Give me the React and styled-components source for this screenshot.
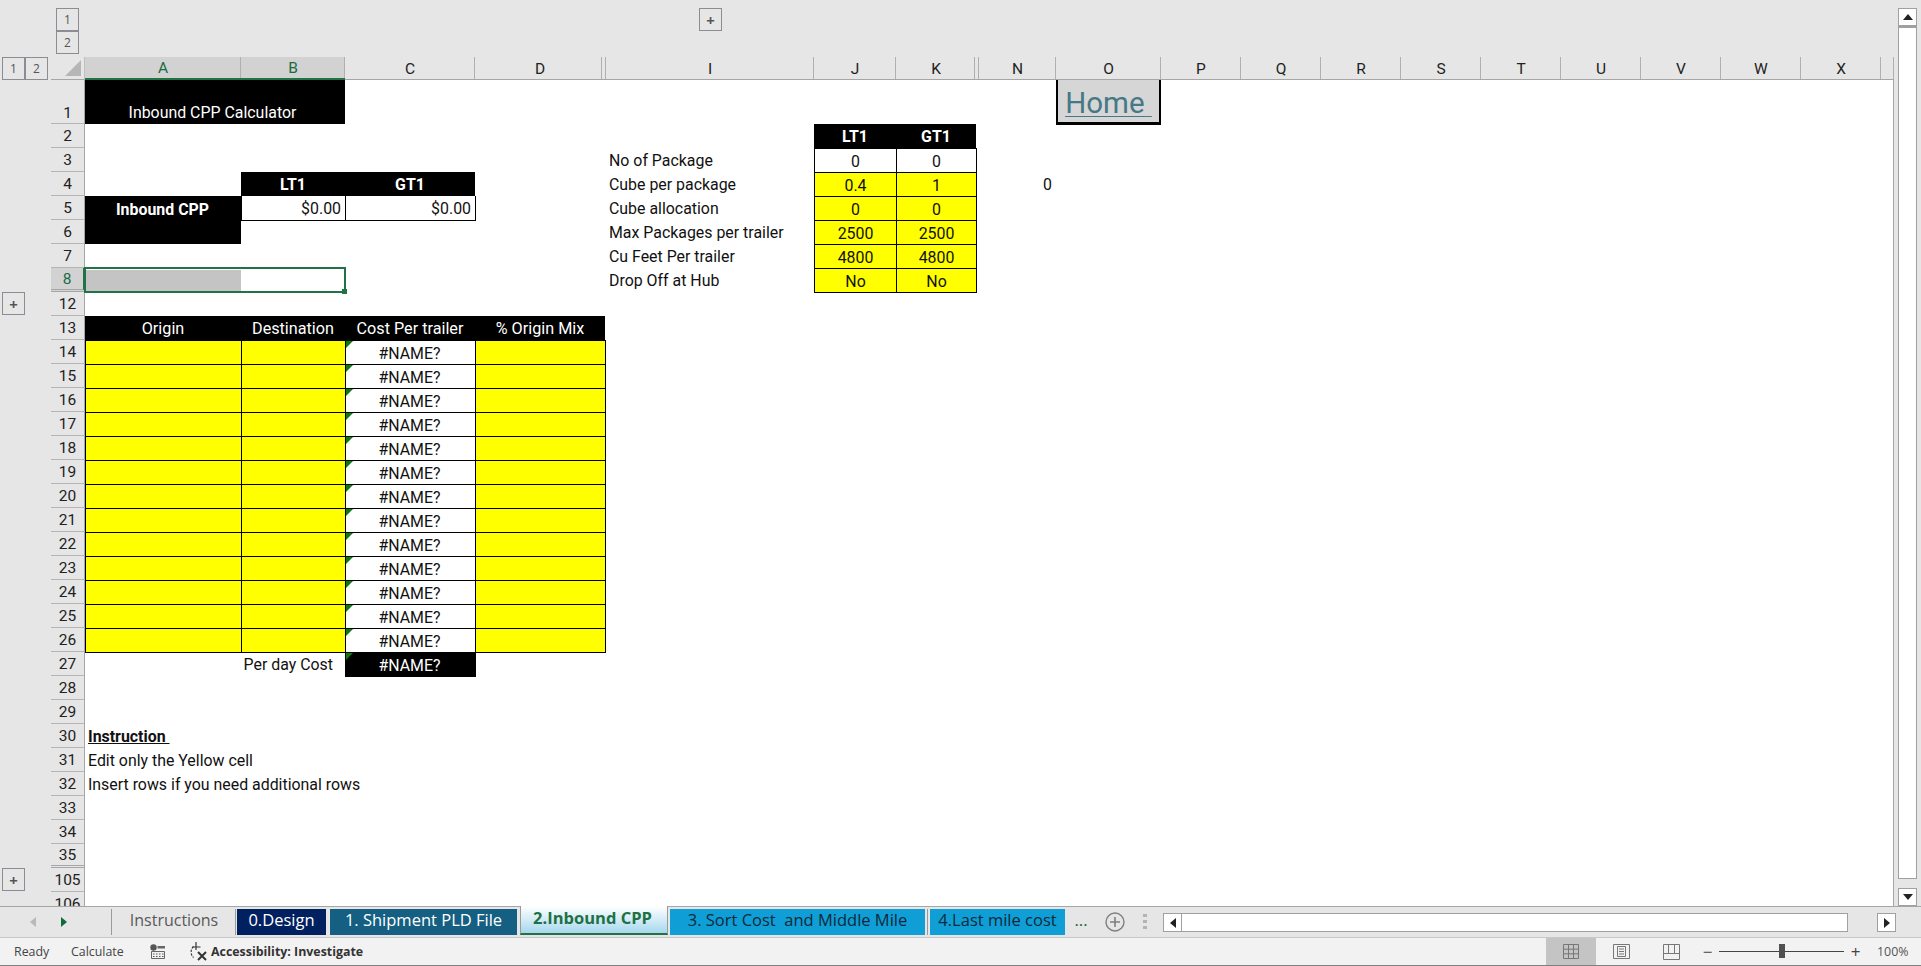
import React from "react";
import styled, { createGlobalStyle } from "styled-components";

const NARROW = `Roboto, "Liberation Sans", sans-serif`;
const UI = `"Open Sans", "Noto Sans", sans-serif`;

const GlobalStyle = createGlobalStyle`
  html, body {
    margin: 0;
    padding: 0;
    overflow: hidden;
    background: #e6e6e6;
  }
`;

// spreadsheet column widths, gutter and row numbers first
const COLUMNS = [
  { name: "", w: 51 },
  { name: "", w: 34 },
  { name: "A", w: 156, on: true },
  { name: "B", w: 104, on: true },
  { name: "C", w: 130 },
  { name: "D", w: 130, inset: 3 },
  { name: "", w: 1 },
  { name: "I", w: 208 },
  { name: "J", w: 82 },
  { name: "K", w: 80, inset: 1 },
  { name: "", w: 3 },
  { name: "N", w: 77 },
  { name: "O", w: 105 },
  ...["P", "Q", "R", "S", "T", "U", "V", "W", "X"].map((name) => ({ name, w: 80 })),
  { name: "", w: 13 },
];

const colIndex = (name) => COLUMNS.findIndex((c) => c.name === name) + 1;

const ROW_LABELS = [
  1, 2, 3, 4, 5, 6, 7, 8, 12, 13, 14, 15, 16, 17, 18, 19, 20, 21, 22, 23, 24,
  25, 26, 27, 28, 29, 30, 31, 32, 33, 34, 35, 105, 106,
];

const rowIndex = (label) => ROW_LABELS.indexOf(label) + 2;

const DATA_ROWS = [14, 15, 16, 17, 18, 19, 20, 21, 22, 23, 24, 25, 26];

const SIDE_ROWS = [
  { row: 3, label: "No of Package", j: "0", k: "0", white: true },
  { row: 4, label: "Cube per package", j: "0.4", k: "1" },
  { row: 5, label: "Cube allocation", j: "0", k: "0" },
  { row: 6, label: "Max Packages per trailer", j: "2500", k: "2500" },
  { row: 7, label: "Cu Feet Per trailer", j: "4800", k: "4800" },
  { row: 8, label: "Drop Off at Hub", j: "No", k: "No" },
];

const TABS = [
  { label: "0.Design", w: 89, bg: "#002060", color: "#ffffff" },
  { label: "1. Shipment PLD File", w: 187, bg: "#156082", color: "#ffffff" },
];

export default function App() {
  return (
    <>
      <GlobalStyle />
      <Page>
        <Workspace>
          <SheetColumn>
            <OutlineBar>
              <OutlineStack>
                <OutlineButton>1</OutlineButton>
                <OutlineButton>2</OutlineButton>
              </OutlineStack>
              <ColumnExpand>+</ColumnExpand>
            </OutlineBar>
            <Sheet>
              <Canvas />
              <RowOutline>
                <OutlineButton>1</OutlineButton>
                <OutlineButton>2</OutlineButton>
              </RowOutline>
              <Corner />
              {COLUMNS.slice(2).map((c, i) => (
                <ColHeader key={i} $col={i + 3} $on={c.on} $inset={c.inset}>
                  {c.name}
                </ColHeader>
              ))}
              {ROW_LABELS.map((label) => (
                <RowHeader
                  key={label}
                  $row={rowIndex(label)}
                  $on={label === 8}
                  $double={label === 8 || label === 35}
                >
                  {label}
                </RowHeader>
              ))}
              <GutterExpand $row={rowIndex(12)}>+</GutterExpand>
              <GutterExpand $row={rowIndex(105)}>+</GutterExpand>

              <TitleCell $col={colIndex("A")} $row={rowIndex(1)} $span={2}>
                Inbound CPP Calculator
              </TitleCell>

              <HeadCell $col={colIndex("B")} $row={rowIndex(4)}>LT1</HeadCell>
              <HeadCell $col={colIndex("C")} $row={rowIndex(4)}>GT1</HeadCell>
              <CppLabel $col={colIndex("A")} $row={rowIndex(5)}>Inbound CPP</CppLabel>
              <MoneyCell $col={colIndex("B")} $row={rowIndex(5)}>$0.00</MoneyCell>
              <MoneyCell $col={colIndex("C")} $row={rowIndex(5)}>$0.00</MoneyCell>

              <SelectedFill $col={colIndex("A")} $row={rowIndex(8)} />
              <Selection $col={colIndex("A")} $row={rowIndex(8)}>
                <FillHandle />
              </Selection>

              <HeadCell $col={colIndex("J")} $row={rowIndex(2)}>LT1</HeadCell>
              <HeadCell $col={colIndex("K")} $row={rowIndex(2)}>GT1</HeadCell>
              {SIDE_ROWS.map((r) => (
                <React.Fragment key={r.row}>
                  <TextCell $col={colIndex("I")} $row={rowIndex(r.row)}>{r.label}</TextCell>
                  <InputCell $col={colIndex("J")} $row={rowIndex(r.row)} $white={r.white}>{r.j}</InputCell>
                  <InputCell $col={colIndex("K")} $row={rowIndex(r.row)} $white={r.white}>{r.k}</InputCell>
                </React.Fragment>
              ))}
              <ValueCell $col={colIndex("N")} $row={rowIndex(4)}>0</ValueCell>
              <HomeCell $col={colIndex("O")} $row={rowIndex(1)}>
                <HomeLink>Home&nbsp;</HomeLink>
              </HomeCell>

              <TableHead $col={colIndex("A")} $row={rowIndex(13)}>Origin</TableHead>
              <TableHead $col={colIndex("B")} $row={rowIndex(13)}>Destination</TableHead>
              <TableHead $col={colIndex("C")} $row={rowIndex(13)}>Cost Per trailer</TableHead>
              <TableHead $col={colIndex("D")} $row={rowIndex(13)}>% Origin Mix</TableHead>
              {DATA_ROWS.map((row) => (
                <React.Fragment key={row}>
                  <InputCell $col={colIndex("A")} $row={rowIndex(row)} />
                  <InputCell $col={colIndex("B")} $row={rowIndex(row)} />
                  <NameCell $col={colIndex("C")} $row={rowIndex(row)}>#NAME?</NameCell>
                  <InputCell $col={colIndex("D")} $row={rowIndex(row)} />
                </React.Fragment>
              ))}
              <PerDayLabel $col={colIndex("B")} $row={rowIndex(27)}>Per day Cost</PerDayLabel>
              <NameCell $col={colIndex("C")} $row={rowIndex(27)} $dark>#NAME?</NameCell>

              <InstructionTitle $col={colIndex("A")} $row={rowIndex(30)}>
                <u>Instruction&nbsp;</u>
              </InstructionTitle>
              <TextCell $col={colIndex("A")} $row={rowIndex(31)} $overflow>
                Edit only the Yellow cell
              </TextCell>
              <TextCell $col={colIndex("A")} $row={rowIndex(32)} $overflow>
                Insert rows if you need additional rows
              </TextCell>
            </Sheet>
          </SheetColumn>
          <VerticalScroll>
            <ScrollButton>
              <svg width="10" height="6" viewBox="0 0 10 6"><path d="M5 0 10 6H0z" fill="#222" /></svg>
            </ScrollButton>
            <VerticalThumb />
            <ScrollButton>
              <svg width="10" height="6" viewBox="0 0 10 6"><path d="M0 0h10L5 6z" fill="#222" /></svg>
            </ScrollButton>
          </VerticalScroll>
        </Workspace>

        <TabBar>
          <TabNav>
            <svg width="6" height="10" viewBox="0 0 6 10"><path d="M6 0v10L0 5z" fill="#b9b9b9" /></svg>
            <svg width="6" height="10" viewBox="0 0 6 10"><path d="M0 0v10l6-5z" fill="#0f6b3a" /></svg>
          </TabNav>
          <TabDivider />
          <PlainTab>Instructions</PlainTab>
          <TabDivider />
          {TABS.map((t) => (
            <Tab key={t.label} $w={t.w} $bg={t.bg} $color={t.color}>{t.label}</Tab>
          ))}
          <ActiveTab>2.Inbound CPP</ActiveTab>
          <Tab $w={255} $bg="#0f9ed5" $color="#0e2a3a">3. Sort Cost&nbsp; and Middle Mile</Tab>
          <TabDivider $tight />
          <Tab $w={135} $bg="#0f9ed5" $color="#0e2a3a">4.Last mile cost</Tab>
          <MoreTabs>...</MoreTabs>
          <AddSheet>
            <svg width="20" height="20" viewBox="0 0 20 20" fill="none" stroke="#7f7f7f">
              <circle cx="10" cy="10" r="9" strokeWidth="1.4" />
              <path d="M10 5v10M5 10h10" strokeWidth="1.6" />
            </svg>
          </AddSheet>
          <SplitDots>
            <svg width="4" height="16" viewBox="0 0 4 16"><path d="M0 0h4v3H0zM0 6h4v3H0zM0 12h4v3H0z" fill="#b4b4b4" /></svg>
          </SplitDots>
          <HorizontalScroll>
            <ScrollButton $wide>
              <svg width="6" height="10" viewBox="0 0 6 10"><path d="M6 0v10L0 5z" fill="#222" /></svg>
            </ScrollButton>
            <HorizontalThumb />
            <ScrollButton $wide>
              <svg width="6" height="10" viewBox="0 0 6 10"><path d="M0 0v10l6-5z" fill="#222" /></svg>
            </ScrollButton>
          </HorizontalScroll>
        </TabBar>

        <StatusBar>
          <StatusText $w={57}>Ready</StatusText>
          <StatusText $w={79}>Calculate</StatusText>
          <StatusIcon $w={38}>
            <svg width="15" height="15" viewBox="0 0 15 15">
              <circle cx="3.500" cy="3.500" r="3.200" fill="#555" />
              <path d="M7.500 2h7.500v2.500H7.500z" fill="#666" />
              <path d="M1.500 7.500h13v7h-13z" fill="none" stroke="#666" />
              <path d="M3 9.500h1.500v1H3zM6 9.500h1.500v1H6zM9 9.500h1.500v1H9zM12 9.500h1.500v1H12zM3 12h1.500v1H3zM6 12h1.500v1H6zM9 12h1.500v1H9zM12 12h1.500v1H12z" fill="#555" />
            </svg>
          </StatusIcon>
          <StatusIcon $w={23}>
            <svg width="20" height="20" viewBox="0 0 20 20" fill="none" stroke="#333">
              <path d="M5.500 4.500a7.500 7.500 0 0 0 0 11" strokeWidth="1.100" strokeDasharray="2.500 1.200" />
              <path d="M8 0v8M4.500 5h8" strokeWidth="1.200" />
              <path d="M10 10l8 8M18 10l-8 8" strokeWidth="2" />
            </svg>
          </StatusIcon>
          <AccessibilityText>Accessibility: Investigate</AccessibilityText>
          <ViewButtons>
            <ViewButton $on>
              <svg width="16" height="15" viewBox="0 0 16 15" fill="none" stroke="#777">
                <path d="M.5.500h15v14H.5zM5.500.500v14M10.500.500v14M.5 5.200h15M.5 9.800h15" />
              </svg>
            </ViewButton>
            <ViewButton>
              <svg width="17" height="15" viewBox="0 0 17 15" fill="none" stroke="#777">
                <path d="M.5.500h16v14H.5zM4.500 2.500h8v10h-8zM6 5h5M6 7.500h5M6 10h5" />
              </svg>
            </ViewButton>
            <ViewButton>
              <svg width="17" height="16" viewBox="0 0 17 16" fill="none" stroke="#777">
                <path d="M.5.500h16v15H.5zM.5 9.500h16M5.500.5v9M11.500.5v9" />
              </svg>
            </ViewButton>
          </ViewButtons>
          <ZoomControl>
            <ZoomGlyph>−</ZoomGlyph>
            <ZoomTrack>
              <ZoomThumb />
            </ZoomTrack>
            <ZoomGlyph>+</ZoomGlyph>
          </ZoomControl>
          <ZoomValue>100%</ZoomValue>
        </StatusBar>
      </Page>
    </>
  );
}

const Page = styled.div`
  width: 1921px;
  height: 966px;
  display: flex;
  flex-direction: column;
  background: #e6e6e6;
  overflow: hidden;
`;

const Workspace = styled.div`
  height: 906px;
  display: flex;
`;

const SheetColumn = styled.div`
  width: 1895px;
  display: flex;
  flex-direction: column;
`;

const OutlineBar = styled.div`
  height: 57px;
  padding: 8px 0 0 56px;
  box-sizing: border-box;
  display: flex;
  align-items: flex-start;
`;

const OutlineStack = styled.div`
  display: flex;
  flex-direction: column;
`;

const OutlineButton = styled.div`
  width: 23px;
  height: 23px;
  box-sizing: border-box;
  border: 1px solid #8c8c94;
  display: flex;
  align-items: center;
  justify-content: center;
  font: 12px ${UI};
  color: #555;
  background: #e6e6e6;
`;

const ColumnExpand = styled(OutlineButton)`
  margin-left: 620px;
  font-size: 15px;
  font-weight: 700;
`;

const Sheet = styled.div`
  flex: 1;
  min-height: 0;
  display: grid;
  grid-template-columns: ${COLUMNS.map((c) => c.w + "px").join(" ")};
  grid-template-rows: 23px 44px repeat(${ROW_LABELS.length - 1}, 24px);
  overflow: hidden;
  font: 15.9px ${NARROW};
  color: #111;
`;

const Canvas = styled.div`
  grid-column: 3 / -1;
  grid-row: 2 / -1;
  background: #fff;
  border-right: 1px solid #a6a6a6;
`;

const RowOutline = styled.div`
  grid-column: 1;
  grid-row: 1;
  display: flex;
  padding-left: 2px;
`;

const Corner = styled.div`
  grid-column: 2;
  grid-row: 1;
  border-right: 1px solid #c0c0c0;
  border-bottom: 1px solid #a6a6a6;
  position: relative;
  &::after {
    content: "";
    position: absolute;
    right: 3px;
    bottom: 3px;
    width: 16px;
    height: 16px;
    background: #b6b6b6;
    clip-path: polygon(100% 0, 100% 100%, 0 100%);
  }
`;

const ColHeader = styled.div`
  grid-column: ${(p) => p.$col};
  grid-row: 1;
  position: relative;
  display: flex;
  align-items: center;
  justify-content: center;
  box-sizing: border-box;
  padding-top: 1px;
  font-size: 15.5px;
  background: ${(p) => (p.$on ? "#d2d2d2" : "#e6e6e6")};
  color: ${(p) => (p.$on ? "#1c6b44" : "#222")};
  border-bottom: ${(p) => (p.$on ? "2px solid #217346" : "1px solid #a6a6a6")};
  &::after {
    content: "";
    position: absolute;
    top: 0;
    bottom: 0;
    right: ${(p) => p.$inset || 0}px;
    width: 1px;
    background: #b0b0b0;
  }
`;

const RowHeader = styled.div`
  grid-column: 2;
  grid-row: ${(p) => p.$row};
  display: flex;
  align-items: ${(p) => (p.$row === 2 ? "flex-end" : "center")};
  justify-content: center;
  padding-top: 1px;
  padding-bottom: ${(p) => (p.$row === 2 ? "1px" : "0")};
  box-sizing: border-box;
  font-size: 15.5px;
  background: ${(p) => (p.$on ? "#d2d2d2" : "#e6e6e6")};
  color: ${(p) => (p.$on ? "#1c6b44" : "#222")};
  border-right: ${(p) => (p.$on ? "2px solid #217346" : "1px solid #a6a6a6")};
  border-bottom: ${(p) => (p.$double ? "3px double #a6a6a6" : "1px solid #b4b4b4")};
`;

const GutterExpand = styled(OutlineButton)`
  grid-column: 1;
  grid-row: ${(p) => p.$row};
  margin-left: 2px;
  font-size: 15px;
  font-weight: 700;
`;

const Cell = styled.div`
  grid-column: ${(p) => p.$col} / span ${(p) => p.$span || 1};
  grid-row: ${(p) => p.$row};
  display: flex;
  align-items: center;
  justify-content: center;
  min-width: 0;
  padding-top: 1px;
  white-space: nowrap;
`;

const TitleCell = styled(Cell)`
  background: #000;
  color: #fff;
  align-items: flex-end;
  padding: 0 5px 2px 0;
`;

const HeadCell = styled(Cell)`
  background: #000;
  color: #fff;
  font-weight: 700;
`;

const TableHead = styled(Cell)`
  background: #000;
  color: #fff;
  font-size: 16.2px;
`;

const CppLabel = styled(Cell)`
  grid-row: ${(p) => p.$row} / span 2;
  background: #000;
  color: #fff;
  font-weight: 700;
  align-items: flex-start;
  padding-top: 4px;
  padding-right: 1px;
`;

const BorderCell = styled(Cell)`
  border: 1px solid #000;
  margin: 0 -1px -1px 0;
`;

const MoneyCell = styled(BorderCell)`
  justify-content: flex-end;
  padding-right: 4px;
  background: #fff;
  border-top: 0;
`;

const InputCell = styled(BorderCell)`
  background: ${(p) => (p.$white ? "#fff" : "#ffff00")};
`;

const NameCell = styled(BorderCell)`
  position: relative;
  padding-right: 2px;
  background: ${(p) => (p.$dark ? "#000" : "#fff")};
  color: ${(p) => (p.$dark ? "#fff" : "#111")};
  &::before {
    content: "";
    position: absolute;
    left: 0;
    top: 0;
    width: 7px;
    height: 7px;
    background: #0a7d0a;
    clip-path: polygon(0 0, 100% 0, 0 100%);
  }
`;

const TextCell = styled(Cell)`
  justify-content: flex-start;
  padding-left: 3px;
  overflow: ${(p) => (p.$overflow ? "visible" : "hidden")};
`;

const ValueCell = styled(Cell)`
  justify-content: flex-end;
  padding-right: 4px;
`;

const PerDayLabel = styled(Cell)`
  justify-content: flex-end;
  padding-right: 12px;
`;

const InstructionTitle = styled(TextCell)`
  font-weight: 700;
`;

const HomeCell = styled(Cell)`
  grid-row: ${(p) => p.$row};
  background: #d6d6d6;
  border: 2px solid #000;
  border-top: 0;
  border-bottom-width: 3px;
  margin-bottom: -1px;
  padding-top: 3px;
  box-sizing: border-box;
`;

const HomeLink = styled.span`
  font-size: 29.5px;
  color: #467886;
  text-decoration: underline;
  text-decoration-thickness: 1px;
  text-underline-offset: 3px;
`;

const SelectedFill = styled(Cell)`
  background: #c4c4c4;
  margin: 2px 0 1px 1px;
`;

const Selection = styled(Cell)`
  grid-column: ${(p) => p.$col} / span 2;
  position: relative;
  border: 2px solid #217346;
  margin: -1px;
  box-sizing: border-box;
`;

const FillHandle = styled.div`
  position: absolute;
  right: -3px;
  bottom: -3px;
  width: 5px;
  height: 5px;
  background: #217346;
`;

const VerticalScroll = styled.div`
  margin: 8px 4px 0 3px;
  width: 19px;
  display: flex;
  flex-direction: column;
`;

const ScrollButton = styled.div`
  flex: none;
  width: ${(p) => (p.$wide ? "19px" : "auto")};
  height: ${(p) => (p.$wide ? "auto" : "18px")};
  box-sizing: border-box;
  border: 1px solid #a0a0a0;
  background: #fff;
  display: flex;
  align-items: center;
  justify-content: center;
`;

const VerticalThumb = styled.div`
  flex: 1;
  background: #fff;
  border: 1px solid #a0a0a0;
  border-top-width: 2px;
  margin-bottom: 9px;
`;

const TabBar = styled.div`
  height: 31px;
  display: flex;
  align-items: flex-start;
  padding-top: 2px;
  box-sizing: border-box;
  border-top: 1px solid #a6a6a6;
  font: 16.5px ${UI};
`;

const TabNav = styled.div`
  width: 111px;
  height: 26px;
  padding-left: 30px;
  box-sizing: border-box;
  display: flex;
  align-items: center;
  gap: 25px;
`;

const TabDivider = styled.div`
  width: 1px;
  height: 26px;
  background: #9a9a9a;
  margin-right: ${(p) => (p.$tight ? "2px" : "1px")};
  margin-left: ${(p) => (p.$tight ? "-2px" : "0")};
`;

const Tab = styled.div`
  width: ${(p) => p.$w}px;
  height: 21px;
  padding-bottom: 5px;
  margin-right: 4px;
  background: ${(p) => p.$bg};
  color: ${(p) => p.$color};
  display: flex;
  align-items: center;
  justify-content: center;
  white-space: nowrap;
`;

const PlainTab = styled.div`
  width: 122px;
  height: 21px;
  padding: 0 5px 5px 0;
  box-sizing: content-box;
  margin-right: -5px;
  display: flex;
  align-items: center;
  justify-content: center;
  color: #595959;
  font-size: 16px;
`;

const ActiveTab = styled.div`
  width: 148px;
  height: 29px;
  margin: -3px 2px 0 -1px;
  box-sizing: border-box;
  padding: 0 3px 5px 0;
  border-bottom: 2px solid #217346;
  border-left: 1px solid #9a9a9a;
  border-right: 1px solid #9a9a9a;
  background: linear-gradient(#ffffff, #a6d8ee);
  color: #1e7145;
  font-weight: 700;
  display: flex;
  align-items: center;
  justify-content: center;
`;

const MoreTabs = styled.div`
  width: 26px;
  height: 21px;
  padding-bottom: 5px;
  display: flex;
  align-items: center;
  justify-content: center;
  color: #0f6b3a;
  margin-left: -1px;
`;

const AddSheet = styled.div`
  width: 20px;
  height: 26px;
  margin-left: 11px;
  display: flex;
  align-items: center;
`;

const SplitDots = styled.div`
  width: 4px;
  height: 26px;
  margin-left: 18px;
  display: flex;
  align-items: center;
`;

const HorizontalScroll = styled.div`
  width: 733px;
  height: 19px;
  margin: 4px 0 0 16px;
  display: flex;
`;

const HorizontalThumb = styled.div`
  flex: 1;
  margin-right: 29px;
  background: #fff;
  border: 1px solid #a0a0a0;
  border-left: 0;
`;

const StatusBar = styled.div`
  height: 29px;
  display: flex;
  align-items: center;
  box-sizing: border-box;
  background: #f2f2f2;
  border-top: 1px solid #c8c8c8;
  border-bottom: 1px solid #808080;
  padding-left: 14px;
  font: 12.4px ${UI};
  color: #444;
`;

const StatusText = styled.div`
  width: ${(p) => p.$w}px;
`;

const StatusIcon = styled.div`
  width: ${(p) => p.$w}px;
  display: flex;
  align-items: center;
`;

const AccessibilityText = styled.div`
  font-weight: 700;
  color: #333;
  white-space: nowrap;
`;

const ViewButtons = styled.div`
  margin-left: auto;
  height: 100%;
  display: flex;
`;

const ViewButton = styled.div`
  width: 50px;
  display: flex;
  align-items: center;
  justify-content: center;
  background: ${(p) => (p.$on ? "#c4c4c4" : "transparent")};
`;

const ZoomControl = styled.div`
  margin-left: 4px;
  display: flex;
  align-items: center;
`;

const ZoomGlyph = styled.div`
  width: 15px;
  text-align: center;
  font-size: 17px;
  color: #444;
`;

const ZoomTrack = styled.div`
  width: 125px;
  height: 1px;
  margin: 0 4px;
  background: #444;
  position: relative;
`;

const ZoomThumb = styled.div`
  position: absolute;
  left: 60px;
  top: -7px;
  width: 6px;
  height: 14px;
  background: #505050;
`;

const ZoomValue = styled.div`
  width: 44px;
  margin-left: 14px;
  color: #555;
`;
